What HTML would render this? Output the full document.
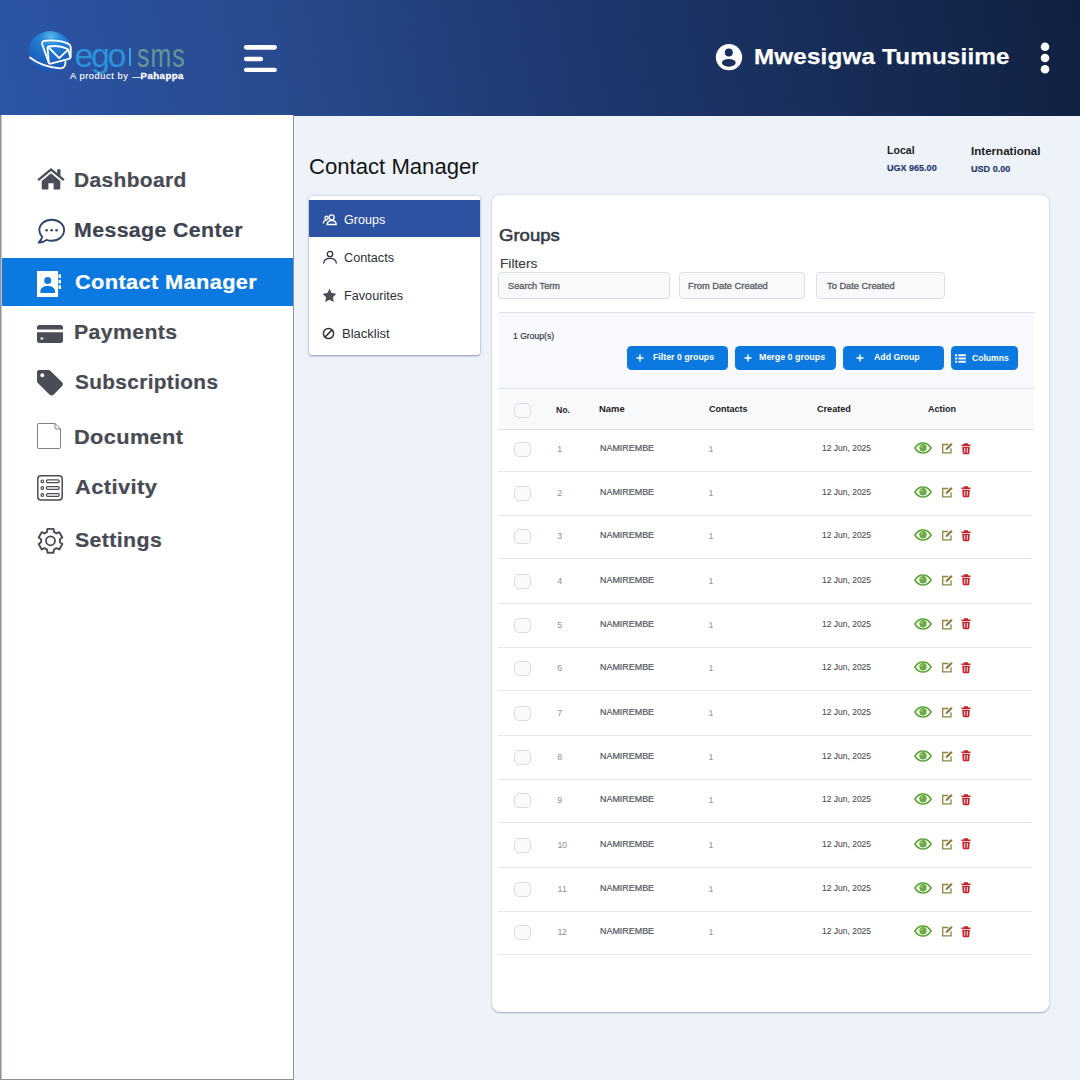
<!DOCTYPE html>
<html lang="en">
<head>
<meta charset="utf-8">
<title>Contact Manager</title>
<style>
*{box-sizing:border-box;margin:0;padding:0}
html,body{width:1080px;height:1080px;overflow:hidden}
body{position:relative;background:#eef2f9;font-family:"Liberation Sans",sans-serif;color:#222}
.a,svg{position:absolute}
.t{position:absolute;white-space:nowrap;line-height:30px;height:30px}
.b{font-weight:700}
#hdr{left:0;top:0;width:1080px;height:116px;background:linear-gradient(80deg,#2b55a6 0%,#284a8e 26%,#1f3a73 50%,#182d59 75%,#102040 100%)}
#side{left:0;top:115px;width:294px;height:965px;background:linear-gradient(90deg,#8d929a 0,#8d929a 1px,#c3c6cc 1px,#c3c6cc 2px,#fff 2px);border-right:1px solid #8b9099;border-bottom:1.500px solid #8b9099}
#act{left:2px;top:258px;width:291px;height:48px;background:#0b79df}
#sub{left:309px;top:196px;width:171px;height:159px;background:#fff;border-radius:3px;box-shadow:0 1px 2px rgba(60,80,130,.5),0 0 3px rgba(60,80,130,.2)}
#subact{left:309px;top:199.500px;width:171px;height:37.300px;background:#2c52a1}
#card{left:491.500px;top:195px;width:557.500px;height:817px;background:#fff;border-radius:8px;box-shadow:0 1px 1.500px rgba(75,90,130,.42),0 0 3px rgba(75,90,130,.15)}
.inp{top:272px;height:27px;border:1px solid #dcdfe4;border-radius:4px;background:#f8f9fa}
#tb{left:499px;top:312px;width:535px;height:77px;background:#f7f9fc;border-top:1px solid #dfe3ea;border-bottom:1px solid #dfe3ea}
.btn{top:346px;height:24px;border-radius:4.5px;background:#0b79df}
#th{left:499px;top:389px;width:535px;height:41px;background:#f8f9fb;border-bottom:1px solid #e0e3ea}
.cb{left:514px;width:17px;height:15px;border:1px solid #d9dce2;border-radius:5px;background:#f9fafb}
.ln{left:498px;width:534px;height:1px;background:#e3e6eb}
</style>
</head>
<body>
<div id="hdr" class="a"></div>
<svg style="left:0;top:0" width="220" height="100" viewBox="0 0 220 100">
<defs><radialGradient id="gl" cx="52%" cy="14%" r="85%"><stop offset="0" stop-color="#58b4ee"/><stop offset=".3" stop-color="#2482d6"/><stop offset=".75" stop-color="#1c62bd"/><stop offset="1" stop-color="#1f58b0"/></radialGradient></defs>
<ellipse cx="50" cy="51.500" rx="21.700" ry="20.400" fill="url(#gl)"/>
<g fill="none" stroke="#fff" stroke-width="1.850" stroke-linejoin="round" stroke-linecap="round">
<path d="M30 57.500C36 62.500 48 68 60 68.300c4 .1 6.200-2.800 5.300-6.500"/>
<path d="M48.600 62.300L42.200 44.200c-.6-1.800.3-3 2.300-3.300 8-1.100 19-.2 24.500 3.300 1.200.8 1.700 1.700 1.700 3v10"/>
<path d="M47.600 48.300c-.3-1 .2-1.600 1.200-1.800 6-1 13.500-.3 18.300 2.200.9.500 1.300 1 1.500 2l1.600 6.300c.2 1-.2 1.600-1.200 1.900L50.800 63.700c-1 .3-1.700-.1-2-1z"/>
<path d="M49.300 48.200l9.900 10 8.600-8.400"/>
</g>
</svg>
<div class="t" style="left:74.5px;top:-15px;font-size:34px;letter-spacing:-2.356px;color:#2d9be2;line-height:40px;height:40px;top:34.800px;opacity:.88">ego</div>
<div class="a" style="left:129.200px;top:47.500px;width:1.500px;height:18px;background:#3aa0e0"></div>
<div class="t" style="left:137.0px;top:-15px;font-size:34px;letter-spacing:1.5px;color:#6a9f96;transform-origin:0 50%;transform:scaleX(0.7318);line-height:40px;height:40px;top:34.800px;opacity:.9">sms</div>
<div class="t" style="left:70.0px;top:61.3px;font-size:9.2px;letter-spacing:0.623px;color:#fff;-webkit-text-stroke:.12px #fff">A product by</div>
<div class="a" style="left:131.500px;top:77px;width:9px;height:1px;background:#c9d6f0"></div>
<div class="t b" style="left:140.5px;top:61.3px;font-size:9.6px;letter-spacing:0.487px;color:#fff;-webkit-text-stroke:.3px #fff">Pahappa</div>
<svg style="left:243px;top:43px" width="36" height="32" viewBox="0 0 36 32"><g fill="#fff"><rect x=".9" y="2" width="33" height="4.700" rx="2.350"/><rect x=".9" y="13.700" width="19.200" height="4.500" rx="2.250"/><rect x=".9" y="24.800" width="33" height="4.300" rx="2.150"/></g></svg>
<svg style="left:715px;top:43px" width="28" height="29" viewBox="0 0 28 29"><circle cx="14" cy="14.200" r="13.150" fill="#fff"/><circle cx="13.800" cy="9.500" r="4" fill="#1b2f5f"/><ellipse cx="13.800" cy="19.800" rx="6.900" ry="3.900" fill="#1b2f5f"/></svg>
<div class="t b" style="left:753.5px;top:41.3px;font-size:22.8px;letter-spacing:0.2px;color:#fff;transform-origin:0 50%;transform:scaleX(1.0595);-webkit-text-stroke:.25px #fff">Mwesigwa Tumusiime</div>
<svg style="left:1038px;top:40px" width="14" height="36" viewBox="0 0 14 36"><g fill="#fff"><circle cx="7" cy="6.700" r="4.300"/><circle cx="7" cy="18" r="4.300"/><circle cx="7" cy="29.300" r="4.300"/></g></svg>
<div id="side" class="a"></div>
<div id="act" class="a"></div>
<svg style="left:37px;top:165px" width="28" height="28" viewBox="0 0 28 28"><path fill="#4a4d55" d="M14 3L.4 14.200l1.500 1.800L14 6.100l12.100 9.900 1.500-1.800-4.100-3.400V4.200h-3.300v3.900z"/><path fill="#4a4d55" d="M14 8.300l-9.300 7.700v7.600c0 .5.400.9.900.9h5.800v-6.200h5.200v6.200h5.800c.5 0 .9-.4.900-.9V16z"/></svg>
<svg style="left:37px;top:217px" width="28" height="28" viewBox="0 0 28 28"><path fill="none" stroke="#30466b" stroke-width="1.900" stroke-linejoin="round" d="M14.700 2.700c-6.900 0-12.400 4.600-12.400 10.400 0 2.600 1.100 4.900 2.900 6.700-.5 2.300-1.700 4.300-3.500 5.800 3.200.2 5.800-.9 7.800-2.700 1.600.6 3.400.9 5.200.9 6.900 0 12.400-4.700 12.400-10.700S21.600 2.700 14.700 2.700z"/><g fill="#30466b"><circle cx="9.600" cy="13.300" r="1.300"/><circle cx="14.600" cy="13.300" r="1.300"/><circle cx="19.600" cy="13.300" r="1.300"/></g></svg>
<svg style="left:37px;top:269px" width="28" height="28" viewBox="0 0 28 28"><path fill="#fff" d="M0 2h20.600c.3 0 .5.200.5.500v25c0 .3-.2.500-.5.500H0z"/><g fill="#0b79df"><circle cx="10.700" cy="11.600" r="3.500"/><path d="M3.300 23c0-4 3.200-5.900 7.400-5.900s7.400 1.900 7.400 5.900c0 .6-.4 1-1 1H4.300c-.6 0-1-.4-1-1z"/></g><g fill="#fff"><rect x="21.600" y="5.300" width="2.400" height="3.700" rx=".6"/><rect x="21.600" y="10.800" width="2.400" height="3.700" rx=".6"/><rect x="21.600" y="16.300" width="2.400" height="3.700" rx=".6"/></g></svg>
<svg style="left:37px;top:320px" width="28" height="28" viewBox="0 0 28 28"><path fill="#4a4d55" d="M2.500 5h21c1.400 0 2.500 1.100 2.500 2.500v2H0v-2C0 6.100 1.100 5 2.500 5z"/><path fill="#4a4d55" fill-rule="evenodd" d="M0 12.300h26v8.200c0 1.400-1.100 2.500-2.500 2.500h-21C1.100 23 0 21.900 0 20.500zM3.600 17.600v2h2.600v-2z"/></svg>
<svg style="left:37px;top:369px" width="28" height="28" viewBox="0 0 28 28"><path fill-rule="evenodd" fill="#4a4d55" d="M0 3c0-1.100.9-2 2-2h9.500c.7 0 1.300.3 1.800.7l11.800 11.500c1.100 1.100 1.100 2.800 0 3.900l-8.500 8.600c-1.100 1.100-2.800 1.100-3.900 0L.8 14c-.5-.5-.8-1.100-.8-1.800zM5.300 4.300a2 2 0 100 4 2 2 0 000-4z"/></svg>
<svg style="left:37px;top:422px" width="28" height="28" viewBox="0 0 28 28"><path fill="#fff" stroke="#6f737a" stroke-width=".9" stroke-linejoin="round" d="M1.500 1.500h16.500l5.500 5.500v18.500c0 .6-.4 1-1 1h-21c-.6 0-1-.4-1-1v-23c0-.6.400-1 1-1z"/><path fill="none" stroke="#6f737a" stroke-width=".9" stroke-linejoin="round" d="M18 1.500v4.500c0 .6.400 1 1 1h4.500"/></svg>
<svg style="left:37px;top:474px" width="28" height="28" viewBox="0 0 28 28"><rect x=".8" y="1.800" width="24.400" height="24.200" rx="3.200" fill="none" stroke="#4a4d55" stroke-width="1.500"/><g fill="none" stroke="#4a4d55" stroke-width="1.200"><circle cx="5.300" cy="7.300" r="1.300"/><circle cx="5.300" cy="14" r="1.300"/><circle cx="5.300" cy="21" r="1.300"/><rect x="9.300" y="5.900" width="13" height="2.800" rx="1.400"/><rect x="9.300" y="12.600" width="13" height="2.800" rx="1.400"/><rect x="9.300" y="19.600" width="13" height="2.800" rx="1.400"/></g></svg>
<svg style="left:37px;top:527px" width="28" height="28" viewBox="0 0 28 28"><path d="M10.11 4.93 L10.40 1.90 L16.60 1.90 L16.89 4.93 L19.49 6.43 L22.26 5.16 L25.36 10.54 L22.88 12.30 L22.88 15.30 L25.36 17.06 L22.26 22.44 L19.49 21.17 L16.89 22.67 L16.60 25.70 L10.40 25.70 L10.11 22.67 L7.51 21.17 L4.74 22.44 L1.64 17.06 L4.12 15.30 L4.12 12.30 L1.64 10.54 L4.74 5.16 L7.51 6.43Z" fill="none" stroke="#4a4d55" stroke-width="1.900" stroke-linejoin="round"/><circle cx="13.5" cy="13.8" r="4.500" fill="none" stroke="#4a4d55" stroke-width="1.800"/></svg>
<div class="t b" style="left:74.0px;top:164.8px;font-size:20px;letter-spacing:0.35px;color:#484b53;transform-origin:0 50%;transform:scaleX(1.047);-webkit-text-stroke:.2px #484b53">Dashboard</div>
<div class="t b" style="left:74.0px;top:215px;font-size:20px;letter-spacing:0.35px;color:#3d4450;transform-origin:0 50%;transform:scaleX(1.0668);-webkit-text-stroke:.2px #3d4450">Message Center</div>
<div class="t b" style="left:74.5px;top:267.3px;font-size:20px;letter-spacing:0.35px;color:#fff;transform-origin:0 50%;transform:scaleX(1.0877);-webkit-text-stroke:.2px #fff">Contact Manager</div>
<div class="t b" style="left:74.0px;top:317px;font-size:20px;letter-spacing:0.35px;color:#484b53;transform-origin:0 50%;transform:scaleX(1.0624);-webkit-text-stroke:.2px #484b53">Payments</div>
<div class="t b" style="left:74.5px;top:367px;font-size:20px;letter-spacing:0.35px;color:#484b53;transform-origin:0 50%;transform:scaleX(1.0395);-webkit-text-stroke:.2px #484b53">Subscriptions</div>
<div class="t b" style="left:74.0px;top:422px;font-size:20px;letter-spacing:0.35px;color:#484b53;transform-origin:0 50%;transform:scaleX(1.0875);-webkit-text-stroke:.2px #484b53">Document</div>
<div class="t b" style="left:75.0px;top:472px;font-size:20px;letter-spacing:0.35px;color:#484b53;transform-origin:0 50%;transform:scaleX(1.0979);-webkit-text-stroke:.2px #484b53">Activity</div>
<div class="t b" style="left:74.5px;top:525px;font-size:20px;letter-spacing:0.35px;color:#484b53;transform-origin:0 50%;transform:scaleX(1.067);-webkit-text-stroke:.2px #484b53">Settings</div>
<div class="t" style="left:309.3px;top:152.2px;font-size:22px;letter-spacing:0px;color:#151515;transform-origin:0 50%;transform:scaleX(1.0056);">Contact Manager</div>
<div class="t b" style="left:886.7px;top:135.7px;font-size:10.4px;letter-spacing:0px;color:#1c1c22;transform-origin:0 50%;transform:scaleX(1.016);">Local</div>
<div class="t b" style="left:886.7px;top:153px;font-size:8.4px;letter-spacing:0px;color:#22356b;transform-origin:0 50%;transform:scaleX(1.0773);-webkit-text-stroke:.15px #22356b">UGX 965.00</div>
<div class="t b" style="left:970.8px;top:137px;font-size:10.4px;letter-spacing:0px;color:#1c1c22;transform-origin:0 50%;transform:scaleX(1.1136);">International</div>
<div class="t b" style="left:970.8px;top:154px;font-size:8.4px;letter-spacing:0px;color:#22356b;transform-origin:0 50%;transform:scaleX(1.082);-webkit-text-stroke:.15px #22356b">USD 0.00</div>
<div id="sub" class="a"></div>
<div id="subact" class="a"></div>
<svg style="left:322px;top:211.5px" width="16" height="16" viewBox="0 0 16 16"><g fill="none" stroke="#fff" stroke-width="1.300" stroke-linecap="round"><circle cx="9.700" cy="5.300" r="2.500"/><path d="M5 12.500c.4-2.800 2.200-4 4.700-4s4.300 1.200 4.700 4z" stroke-linejoin="round"/><circle cx="4.500" cy="5.800" r="1.600"/><path d="M1.300 11c.3-1.900 1.400-2.800 3.200-2.800"/></g></svg>
<svg style="left:322px;top:249px" width="16" height="16" viewBox="0 0 16 16"><g fill="none" stroke="#2f3540" stroke-width="1.300" stroke-linecap="round"><circle cx="8" cy="5" r="2.700"/><path d="M1.700 14c.3-3.300 2.900-4.700 6.300-4.700s6 1.400 6.300 4.700"/></g></svg>
<svg style="left:322px;top:287.5px" width="15" height="15" viewBox="0 0 15 15"><path fill="#4a4e55" d="M7.500.7l2.100 4.400 4.800.7-3.500 3.400.9 4.800-4.300-2.300-4.300 2.300.9-4.800L.6 5.800l4.800-.7z"/></svg>
<svg style="left:322px;top:327px" width="13" height="13" viewBox="0 0 13 13"><g fill="none" stroke="#33373d" stroke-width="1.500"><circle cx="6.500" cy="6.500" r="5.100"/><path d="M2.900 10.100l7.200-7.200"/></g></svg>
<div class="t" style="left:344.0px;top:204.6px;font-size:12.5px;letter-spacing:0px;color:#fff;transform-origin:0 50%;transform:scaleX(1.0052);">Groups</div>
<div class="t" style="left:344.0px;top:243px;font-size:12.5px;letter-spacing:0px;color:#2b303a;transform-origin:0 50%;transform:scaleX(1.0137);">Contacts</div>
<div class="t" style="left:344.0px;top:281px;font-size:12.5px;letter-spacing:0px;color:#2b303a;transform-origin:0 50%;transform:scaleX(1.0129);">Favourites</div>
<div class="t" style="left:342.3px;top:318.6px;font-size:12.5px;letter-spacing:0px;color:#2b303a;transform-origin:0 50%;transform:scaleX(1.0403);">Blacklist</div>
<div id="card" class="a"></div>
<div class="t" style="left:498.8px;top:220.5px;font-size:17px;letter-spacing:0px;color:#333a44;transform-origin:0 50%;transform:scaleX(1.0907);-webkit-text-stroke:.55px #333a44">Groups</div>
<div class="t" style="left:499.7px;top:249px;font-size:13.6px;letter-spacing:0px;color:#3b4046;transform-origin:0 50%;transform:scaleX(1.0076);-webkit-text-stroke:.15px #3b4046">Filters</div>
<div class="a inp" style="left:498px;width:172px"></div>
<div class="a inp" style="left:679px;width:126px"></div>
<div class="a inp" style="left:816px;width:129px"></div>
<div class="t" style="left:507.5px;top:272px;font-size:8.2px;letter-spacing:0px;color:#5b5f66;transform-origin:0 50%;transform:scaleX(1.1245);-webkit-text-stroke:.3px #5b5f66">Search Term</div>
<div class="t" style="left:687.7px;top:272px;font-size:8.2px;letter-spacing:0px;color:#5b5f66;transform-origin:0 50%;transform:scaleX(1.1384);-webkit-text-stroke:.3px #5b5f66">From Date Created</div>
<div class="t" style="left:826.5px;top:272px;font-size:8.2px;letter-spacing:0px;color:#5b5f66;transform-origin:0 50%;transform:scaleX(1.1354);-webkit-text-stroke:.3px #5b5f66">To Date Created</div>
<div id="tb" class="a"></div>
<div class="t" style="left:512.8px;top:322.2px;font-size:8.2px;letter-spacing:0px;color:#30343a;transform-origin:0 50%;transform:scaleX(1.0513);-webkit-text-stroke:.15px #30343a">1 Group(s)</div>
<div class="a btn" style="left:627px;width:101px"></div>
<svg style="left:636px;top:354px" width="8" height="8" viewBox="0 0 8 8"><path d="M4 .5v7M.5 4h7" stroke="#fff" stroke-width="1.500" fill="none"/></svg>
<div class="t b" style="left:652.8px;top:342.3px;font-size:8.4px;letter-spacing:0px;color:#fff;transform-origin:0 50%;transform:scaleX(1.0491);">Filter 0 groups</div>
<div class="a btn" style="left:735px;width:101px"></div>
<svg style="left:743.5px;top:354px" width="8" height="8" viewBox="0 0 8 8"><path d="M4 .5v7M.5 4h7" stroke="#fff" stroke-width="1.500" fill="none"/></svg>
<div class="t b" style="left:759.0px;top:342.3px;font-size:8.4px;letter-spacing:0px;color:#fff;transform-origin:0 50%;transform:scaleX(1.06);">Merge 0 groups</div>
<div class="a btn" style="left:843px;width:101px"></div>
<svg style="left:855.8px;top:354px" width="8" height="8" viewBox="0 0 8 8"><path d="M4 .5v7M.5 4h7" stroke="#fff" stroke-width="1.500" fill="none"/></svg>
<div class="t b" style="left:874.1px;top:342.3px;font-size:8.4px;letter-spacing:0px;color:#fff;transform-origin:0 50%;transform:scaleX(1.042);">Add Group</div>
<div class="a btn" style="left:951px;width:67px"></div>
<svg style="left:955px;top:353.5px" width="11" height="9" viewBox="0 0 11 9"><g fill="#fff"><rect x="0" y=".3" width="2.200" height="1.900"/><rect x="3.400" y=".3" width="7.400" height="1.900"/><rect x="0" y="3.550" width="2.200" height="1.900"/><rect x="3.400" y="3.550" width="7.400" height="1.900"/><rect x="0" y="6.800" width="2.200" height="1.900"/><rect x="3.400" y="6.800" width="7.400" height="1.900"/></g></svg>
<div class="t b" style="left:972.2px;top:342.8px;font-size:8.4px;letter-spacing:0px;color:#fff;transform-origin:0 50%;transform:scaleX(1.0241);">Columns</div>
<div id="th" class="a"></div>
<div class="a cb" style="top:403px"></div>
<div class="t b" style="left:556.3px;top:395.3px;font-size:8.4px;letter-spacing:0px;color:#1f2126;transform-origin:0 50%;transform:scaleX(1.0346);">No.</div>
<div class="t b" style="left:598.8px;top:394.2px;font-size:8.4px;letter-spacing:0px;color:#1f2126;transform-origin:0 50%;transform:scaleX(1.1232);">Name</div>
<div class="t b" style="left:708.8px;top:394.2px;font-size:8.4px;letter-spacing:0px;color:#1f2126;transform-origin:0 50%;transform:scaleX(1.0769);">Contacts</div>
<div class="t b" style="left:816.8px;top:394.2px;font-size:8.4px;letter-spacing:0px;color:#1f2126;transform-origin:0 50%;transform:scaleX(1.0869);">Created</div>
<div class="t b" style="left:927.8px;top:394.2px;font-size:8.4px;letter-spacing:0px;color:#1f2126;transform-origin:0 50%;transform:scaleX(1.0791);">Action</div>
<div class="a ln" style="top:471px"></div>
<div class="a cb" style="top:442.0px"></div>
<div class="t" style="left:557.3px;top:434.0px;font-size:8.8px;letter-spacing:0px;color:#8d9096;">1</div>
<div class="t" style="left:600.2px;top:433.3px;font-size:8.4px;letter-spacing:0px;color:#54585e;transform-origin:0 50%;transform:scaleX(1.0655);-webkit-text-stroke:.2px #54585e">NAMIREMBE</div>
<div class="t" style="left:708.6px;top:434.0px;font-size:8.8px;letter-spacing:0px;color:#8d9096;">1</div>
<div class="t" style="left:822.0px;top:433.3px;font-size:8.4px;letter-spacing:0px;color:#464a50;transform-origin:0 50%;transform:scaleX(1.0128);-webkit-text-stroke:.08px #464a50">12 Jun, 2025</div>
<svg style="left:914px;top:442.4px" width="18" height="12" viewBox="0 0 18 12"><path d="M.9 6C3 2.500 5.800.9 9 .9s6 1.600 8.100 5.100C15 9.500 12.200 11.100 9 11.100S3 9.500.9 6z" fill="#fff" stroke="#5aa332" stroke-width="1.500"/><circle cx="9" cy="5.800" r="3.700" fill="#68ad42"/><circle cx="7.700" cy="4.500" r="1.300" fill="#93cb70"/></svg>
<svg style="left:940.5px;top:441.9px" width="12" height="12" viewBox="0 0 12 12"><path d="M7.200 2.500H1.700v8.300H10V6.300" fill="none" stroke="#8a8740" stroke-width="1.300"/><path d="M4.500 8l.5-2.100 5-5 1.600 1.600-5 5z" fill="#8a7c40"/></svg>
<svg style="left:961px;top:442.5px" width="10" height="12" viewBox="0 0 10 12"><path d="M3.200.3h3.600l.5 1.100h2.200v1.500H.5V1.400h2.200z" fill="#c5222b"/><path fill-rule="evenodd" d="M1.200 3.800h7.600l-.5 6.500c0 .5-.5.900-1 .9H2.700c-.5 0-1-.4-1-.9zM3.300 5.100v4.700h.9V5.100zm2.500 0v4.700h.9V5.100z" fill="#c5222b"/></svg>
<div class="a ln" style="top:515px"></div>
<div class="a cb" style="top:485.7px"></div>
<div class="t" style="left:557.3px;top:477.7px;font-size:8.8px;letter-spacing:0px;color:#8d9096;">2</div>
<div class="t" style="left:600.2px;top:477px;font-size:8.4px;letter-spacing:0px;color:#54585e;transform-origin:0 50%;transform:scaleX(1.0655);-webkit-text-stroke:.2px #54585e">NAMIREMBE</div>
<div class="t" style="left:708.6px;top:477.7px;font-size:8.8px;letter-spacing:0px;color:#8d9096;">1</div>
<div class="t" style="left:822.0px;top:477px;font-size:8.4px;letter-spacing:0px;color:#464a50;transform-origin:0 50%;transform:scaleX(1.0128);-webkit-text-stroke:.08px #464a50">12 Jun, 2025</div>
<svg style="left:914px;top:486.1px" width="18" height="12" viewBox="0 0 18 12"><path d="M.9 6C3 2.500 5.800.9 9 .9s6 1.600 8.100 5.100C15 9.500 12.200 11.100 9 11.100S3 9.500.9 6z" fill="#fff" stroke="#5aa332" stroke-width="1.500"/><circle cx="9" cy="5.800" r="3.700" fill="#68ad42"/><circle cx="7.700" cy="4.500" r="1.300" fill="#93cb70"/></svg>
<svg style="left:940.5px;top:485.6px" width="12" height="12" viewBox="0 0 12 12"><path d="M7.200 2.500H1.700v8.300H10V6.300" fill="none" stroke="#8a8740" stroke-width="1.300"/><path d="M4.500 8l.5-2.100 5-5 1.600 1.600-5 5z" fill="#8a7c40"/></svg>
<svg style="left:961px;top:486.2px" width="10" height="12" viewBox="0 0 10 12"><path d="M3.200.3h3.600l.5 1.100h2.200v1.500H.5V1.400h2.200z" fill="#c5222b"/><path fill-rule="evenodd" d="M1.200 3.800h7.600l-.5 6.500c0 .5-.5.900-1 .9H2.700c-.5 0-1-.4-1-.9zM3.300 5.100v4.700h.9V5.100zm2.500 0v4.700h.9V5.100z" fill="#c5222b"/></svg>
<div class="a ln" style="top:558px"></div>
<div class="a cb" style="top:529.0px"></div>
<div class="t" style="left:557.3px;top:521.0px;font-size:8.8px;letter-spacing:0px;color:#8d9096;">3</div>
<div class="t" style="left:600.2px;top:520.3px;font-size:8.4px;letter-spacing:0px;color:#54585e;transform-origin:0 50%;transform:scaleX(1.0655);-webkit-text-stroke:.2px #54585e">NAMIREMBE</div>
<div class="t" style="left:708.6px;top:521.0px;font-size:8.8px;letter-spacing:0px;color:#8d9096;">1</div>
<div class="t" style="left:822.0px;top:520.3px;font-size:8.4px;letter-spacing:0px;color:#464a50;transform-origin:0 50%;transform:scaleX(1.0128);-webkit-text-stroke:.08px #464a50">12 Jun, 2025</div>
<svg style="left:914px;top:529.4px" width="18" height="12" viewBox="0 0 18 12"><path d="M.9 6C3 2.500 5.800.9 9 .9s6 1.600 8.100 5.100C15 9.500 12.200 11.100 9 11.100S3 9.500.9 6z" fill="#fff" stroke="#5aa332" stroke-width="1.500"/><circle cx="9" cy="5.800" r="3.700" fill="#68ad42"/><circle cx="7.700" cy="4.500" r="1.300" fill="#93cb70"/></svg>
<svg style="left:940.5px;top:528.9px" width="12" height="12" viewBox="0 0 12 12"><path d="M7.200 2.500H1.700v8.300H10V6.300" fill="none" stroke="#8a8740" stroke-width="1.300"/><path d="M4.500 8l.5-2.100 5-5 1.600 1.600-5 5z" fill="#8a7c40"/></svg>
<svg style="left:961px;top:529.5px" width="10" height="12" viewBox="0 0 10 12"><path d="M3.200.3h3.600l.5 1.100h2.200v1.500H.5V1.400h2.200z" fill="#c5222b"/><path fill-rule="evenodd" d="M1.200 3.800h7.600l-.5 6.500c0 .5-.5.900-1 .9H2.700c-.5 0-1-.4-1-.9zM3.300 5.100v4.700h.9V5.100zm2.500 0v4.700h.9V5.100z" fill="#c5222b"/></svg>
<div class="a ln" style="top:603px"></div>
<div class="a cb" style="top:573.7px"></div>
<div class="t" style="left:557.3px;top:565.7px;font-size:8.8px;letter-spacing:0px;color:#8d9096;">4</div>
<div class="t" style="left:600.2px;top:565px;font-size:8.4px;letter-spacing:0px;color:#54585e;transform-origin:0 50%;transform:scaleX(1.0655);-webkit-text-stroke:.2px #54585e">NAMIREMBE</div>
<div class="t" style="left:708.6px;top:565.7px;font-size:8.8px;letter-spacing:0px;color:#8d9096;">1</div>
<div class="t" style="left:822.0px;top:565px;font-size:8.4px;letter-spacing:0px;color:#464a50;transform-origin:0 50%;transform:scaleX(1.0128);-webkit-text-stroke:.08px #464a50">12 Jun, 2025</div>
<svg style="left:914px;top:574.1px" width="18" height="12" viewBox="0 0 18 12"><path d="M.9 6C3 2.500 5.800.9 9 .9s6 1.600 8.100 5.100C15 9.500 12.200 11.100 9 11.100S3 9.500.9 6z" fill="#fff" stroke="#5aa332" stroke-width="1.500"/><circle cx="9" cy="5.800" r="3.700" fill="#68ad42"/><circle cx="7.700" cy="4.500" r="1.300" fill="#93cb70"/></svg>
<svg style="left:940.5px;top:573.6px" width="12" height="12" viewBox="0 0 12 12"><path d="M7.200 2.500H1.700v8.300H10V6.300" fill="none" stroke="#8a8740" stroke-width="1.300"/><path d="M4.500 8l.5-2.100 5-5 1.600 1.600-5 5z" fill="#8a7c40"/></svg>
<svg style="left:961px;top:574.2px" width="10" height="12" viewBox="0 0 10 12"><path d="M3.200.3h3.600l.5 1.100h2.200v1.500H.5V1.400h2.200z" fill="#c5222b"/><path fill-rule="evenodd" d="M1.200 3.800h7.600l-.5 6.500c0 .5-.5.900-1 .9H2.700c-.5 0-1-.4-1-.9zM3.300 5.100v4.700h.9V5.100zm2.500 0v4.700h.9V5.100z" fill="#c5222b"/></svg>
<div class="a ln" style="top:647px"></div>
<div class="a cb" style="top:617.7px"></div>
<div class="t" style="left:557.3px;top:609.7px;font-size:8.8px;letter-spacing:0px;color:#8d9096;">5</div>
<div class="t" style="left:600.2px;top:609px;font-size:8.4px;letter-spacing:0px;color:#54585e;transform-origin:0 50%;transform:scaleX(1.0655);-webkit-text-stroke:.2px #54585e">NAMIREMBE</div>
<div class="t" style="left:708.6px;top:609.7px;font-size:8.8px;letter-spacing:0px;color:#8d9096;">1</div>
<div class="t" style="left:822.0px;top:609px;font-size:8.4px;letter-spacing:0px;color:#464a50;transform-origin:0 50%;transform:scaleX(1.0128);-webkit-text-stroke:.08px #464a50">12 Jun, 2025</div>
<svg style="left:914px;top:618.1px" width="18" height="12" viewBox="0 0 18 12"><path d="M.9 6C3 2.500 5.800.9 9 .9s6 1.600 8.100 5.100C15 9.500 12.200 11.100 9 11.100S3 9.500.9 6z" fill="#fff" stroke="#5aa332" stroke-width="1.500"/><circle cx="9" cy="5.800" r="3.700" fill="#68ad42"/><circle cx="7.700" cy="4.500" r="1.300" fill="#93cb70"/></svg>
<svg style="left:940.5px;top:617.6px" width="12" height="12" viewBox="0 0 12 12"><path d="M7.200 2.500H1.700v8.300H10V6.300" fill="none" stroke="#8a8740" stroke-width="1.300"/><path d="M4.500 8l.5-2.100 5-5 1.600 1.600-5 5z" fill="#8a7c40"/></svg>
<svg style="left:961px;top:618.2px" width="10" height="12" viewBox="0 0 10 12"><path d="M3.200.3h3.600l.5 1.100h2.200v1.500H.5V1.400h2.200z" fill="#c5222b"/><path fill-rule="evenodd" d="M1.200 3.800h7.600l-.5 6.500c0 .5-.5.900-1 .9H2.700c-.5 0-1-.4-1-.9zM3.300 5.100v4.700h.9V5.100zm2.500 0v4.700h.9V5.100z" fill="#c5222b"/></svg>
<div class="a ln" style="top:690px"></div>
<div class="a cb" style="top:661.0px"></div>
<div class="t" style="left:557.3px;top:653.0px;font-size:8.8px;letter-spacing:0px;color:#8d9096;">6</div>
<div class="t" style="left:600.2px;top:652.3px;font-size:8.4px;letter-spacing:0px;color:#54585e;transform-origin:0 50%;transform:scaleX(1.0655);-webkit-text-stroke:.2px #54585e">NAMIREMBE</div>
<div class="t" style="left:708.6px;top:653.0px;font-size:8.8px;letter-spacing:0px;color:#8d9096;">1</div>
<div class="t" style="left:822.0px;top:652.3px;font-size:8.4px;letter-spacing:0px;color:#464a50;transform-origin:0 50%;transform:scaleX(1.0128);-webkit-text-stroke:.08px #464a50">12 Jun, 2025</div>
<svg style="left:914px;top:661.4px" width="18" height="12" viewBox="0 0 18 12"><path d="M.9 6C3 2.500 5.800.9 9 .9s6 1.600 8.100 5.100C15 9.500 12.200 11.100 9 11.100S3 9.500.9 6z" fill="#fff" stroke="#5aa332" stroke-width="1.500"/><circle cx="9" cy="5.800" r="3.700" fill="#68ad42"/><circle cx="7.700" cy="4.500" r="1.300" fill="#93cb70"/></svg>
<svg style="left:940.5px;top:660.9px" width="12" height="12" viewBox="0 0 12 12"><path d="M7.200 2.500H1.700v8.300H10V6.300" fill="none" stroke="#8a8740" stroke-width="1.300"/><path d="M4.500 8l.5-2.100 5-5 1.600 1.600-5 5z" fill="#8a7c40"/></svg>
<svg style="left:961px;top:661.5px" width="10" height="12" viewBox="0 0 10 12"><path d="M3.200.3h3.600l.5 1.100h2.200v1.500H.5V1.400h2.200z" fill="#c5222b"/><path fill-rule="evenodd" d="M1.200 3.800h7.600l-.5 6.500c0 .5-.5.900-1 .9H2.700c-.5 0-1-.4-1-.9zM3.300 5.100v4.700h.9V5.100zm2.500 0v4.700h.9V5.100z" fill="#c5222b"/></svg>
<div class="a ln" style="top:735px"></div>
<div class="a cb" style="top:705.7px"></div>
<div class="t" style="left:557.3px;top:697.7px;font-size:8.8px;letter-spacing:0px;color:#8d9096;">7</div>
<div class="t" style="left:600.2px;top:697px;font-size:8.4px;letter-spacing:0px;color:#54585e;transform-origin:0 50%;transform:scaleX(1.0655);-webkit-text-stroke:.2px #54585e">NAMIREMBE</div>
<div class="t" style="left:708.6px;top:697.7px;font-size:8.8px;letter-spacing:0px;color:#8d9096;">1</div>
<div class="t" style="left:822.0px;top:697px;font-size:8.4px;letter-spacing:0px;color:#464a50;transform-origin:0 50%;transform:scaleX(1.0128);-webkit-text-stroke:.08px #464a50">12 Jun, 2025</div>
<svg style="left:914px;top:706.1px" width="18" height="12" viewBox="0 0 18 12"><path d="M.9 6C3 2.500 5.800.9 9 .9s6 1.600 8.100 5.100C15 9.500 12.200 11.100 9 11.100S3 9.500.9 6z" fill="#fff" stroke="#5aa332" stroke-width="1.500"/><circle cx="9" cy="5.800" r="3.700" fill="#68ad42"/><circle cx="7.700" cy="4.500" r="1.300" fill="#93cb70"/></svg>
<svg style="left:940.5px;top:705.6px" width="12" height="12" viewBox="0 0 12 12"><path d="M7.200 2.500H1.700v8.300H10V6.300" fill="none" stroke="#8a8740" stroke-width="1.300"/><path d="M4.500 8l.5-2.100 5-5 1.600 1.600-5 5z" fill="#8a7c40"/></svg>
<svg style="left:961px;top:706.2px" width="10" height="12" viewBox="0 0 10 12"><path d="M3.200.3h3.600l.5 1.100h2.200v1.500H.5V1.400h2.200z" fill="#c5222b"/><path fill-rule="evenodd" d="M1.200 3.800h7.600l-.5 6.500c0 .5-.5.900-1 .9H2.700c-.5 0-1-.4-1-.9zM3.300 5.100v4.700h.9V5.100zm2.500 0v4.700h.9V5.100z" fill="#c5222b"/></svg>
<div class="a ln" style="top:779px"></div>
<div class="a cb" style="top:749.7px"></div>
<div class="t" style="left:557.3px;top:741.7px;font-size:8.8px;letter-spacing:0px;color:#8d9096;">8</div>
<div class="t" style="left:600.2px;top:741px;font-size:8.4px;letter-spacing:0px;color:#54585e;transform-origin:0 50%;transform:scaleX(1.0655);-webkit-text-stroke:.2px #54585e">NAMIREMBE</div>
<div class="t" style="left:708.6px;top:741.7px;font-size:8.8px;letter-spacing:0px;color:#8d9096;">1</div>
<div class="t" style="left:822.0px;top:741px;font-size:8.4px;letter-spacing:0px;color:#464a50;transform-origin:0 50%;transform:scaleX(1.0128);-webkit-text-stroke:.08px #464a50">12 Jun, 2025</div>
<svg style="left:914px;top:750.1px" width="18" height="12" viewBox="0 0 18 12"><path d="M.9 6C3 2.500 5.800.9 9 .9s6 1.600 8.100 5.100C15 9.500 12.200 11.100 9 11.100S3 9.500.9 6z" fill="#fff" stroke="#5aa332" stroke-width="1.500"/><circle cx="9" cy="5.800" r="3.700" fill="#68ad42"/><circle cx="7.700" cy="4.500" r="1.300" fill="#93cb70"/></svg>
<svg style="left:940.5px;top:749.6px" width="12" height="12" viewBox="0 0 12 12"><path d="M7.200 2.500H1.700v8.300H10V6.300" fill="none" stroke="#8a8740" stroke-width="1.300"/><path d="M4.500 8l.5-2.100 5-5 1.600 1.600-5 5z" fill="#8a7c40"/></svg>
<svg style="left:961px;top:750.2px" width="10" height="12" viewBox="0 0 10 12"><path d="M3.200.3h3.600l.5 1.100h2.200v1.500H.5V1.400h2.200z" fill="#c5222b"/><path fill-rule="evenodd" d="M1.200 3.800h7.600l-.5 6.500c0 .5-.5.900-1 .9H2.700c-.5 0-1-.4-1-.9zM3.300 5.100v4.700h.9V5.100zm2.500 0v4.700h.9V5.100z" fill="#c5222b"/></svg>
<div class="a ln" style="top:822px"></div>
<div class="a cb" style="top:793.0px"></div>
<div class="t" style="left:557.3px;top:785.0px;font-size:8.8px;letter-spacing:0px;color:#8d9096;">9</div>
<div class="t" style="left:600.2px;top:784.3px;font-size:8.4px;letter-spacing:0px;color:#54585e;transform-origin:0 50%;transform:scaleX(1.0655);-webkit-text-stroke:.2px #54585e">NAMIREMBE</div>
<div class="t" style="left:708.6px;top:785.0px;font-size:8.8px;letter-spacing:0px;color:#8d9096;">1</div>
<div class="t" style="left:822.0px;top:784.3px;font-size:8.4px;letter-spacing:0px;color:#464a50;transform-origin:0 50%;transform:scaleX(1.0128);-webkit-text-stroke:.08px #464a50">12 Jun, 2025</div>
<svg style="left:914px;top:793.4px" width="18" height="12" viewBox="0 0 18 12"><path d="M.9 6C3 2.500 5.800.9 9 .9s6 1.600 8.100 5.100C15 9.500 12.200 11.100 9 11.100S3 9.500.9 6z" fill="#fff" stroke="#5aa332" stroke-width="1.500"/><circle cx="9" cy="5.800" r="3.700" fill="#68ad42"/><circle cx="7.700" cy="4.500" r="1.300" fill="#93cb70"/></svg>
<svg style="left:940.5px;top:792.9px" width="12" height="12" viewBox="0 0 12 12"><path d="M7.200 2.500H1.700v8.300H10V6.300" fill="none" stroke="#8a8740" stroke-width="1.300"/><path d="M4.500 8l.5-2.100 5-5 1.600 1.600-5 5z" fill="#8a7c40"/></svg>
<svg style="left:961px;top:793.5px" width="10" height="12" viewBox="0 0 10 12"><path d="M3.200.3h3.600l.5 1.100h2.200v1.500H.5V1.400h2.200z" fill="#c5222b"/><path fill-rule="evenodd" d="M1.200 3.800h7.600l-.5 6.500c0 .5-.5.900-1 .9H2.700c-.5 0-1-.4-1-.9zM3.300 5.100v4.700h.9V5.100zm2.500 0v4.700h.9V5.100z" fill="#c5222b"/></svg>
<div class="a ln" style="top:867px"></div>
<div class="a cb" style="top:837.7px"></div>
<div class="t" style="left:557.5px;top:829.7px;font-size:8.8px;letter-spacing:-0.486px;color:#8d9096;">10</div>
<div class="t" style="left:600.2px;top:829px;font-size:8.4px;letter-spacing:0px;color:#54585e;transform-origin:0 50%;transform:scaleX(1.0655);-webkit-text-stroke:.2px #54585e">NAMIREMBE</div>
<div class="t" style="left:708.6px;top:829.7px;font-size:8.8px;letter-spacing:0px;color:#8d9096;">1</div>
<div class="t" style="left:822.0px;top:829px;font-size:8.4px;letter-spacing:0px;color:#464a50;transform-origin:0 50%;transform:scaleX(1.0128);-webkit-text-stroke:.08px #464a50">12 Jun, 2025</div>
<svg style="left:914px;top:838.1px" width="18" height="12" viewBox="0 0 18 12"><path d="M.9 6C3 2.500 5.800.9 9 .9s6 1.600 8.100 5.100C15 9.500 12.200 11.100 9 11.100S3 9.500.9 6z" fill="#fff" stroke="#5aa332" stroke-width="1.500"/><circle cx="9" cy="5.800" r="3.700" fill="#68ad42"/><circle cx="7.700" cy="4.500" r="1.300" fill="#93cb70"/></svg>
<svg style="left:940.5px;top:837.6px" width="12" height="12" viewBox="0 0 12 12"><path d="M7.200 2.500H1.700v8.300H10V6.300" fill="none" stroke="#8a8740" stroke-width="1.300"/><path d="M4.500 8l.5-2.100 5-5 1.600 1.600-5 5z" fill="#8a7c40"/></svg>
<svg style="left:961px;top:838.2px" width="10" height="12" viewBox="0 0 10 12"><path d="M3.200.3h3.600l.5 1.100h2.200v1.500H.5V1.400h2.200z" fill="#c5222b"/><path fill-rule="evenodd" d="M1.200 3.800h7.600l-.5 6.500c0 .5-.5.900-1 .9H2.700c-.5 0-1-.4-1-.9zM3.300 5.100v4.700h.9V5.100zm2.500 0v4.700h.9V5.100z" fill="#c5222b"/></svg>
<div class="a ln" style="top:911px"></div>
<div class="a cb" style="top:881.7px"></div>
<div class="t" style="left:557.5px;top:873.7px;font-size:8.8px;letter-spacing:0.166px;color:#8d9096;">11</div>
<div class="t" style="left:600.2px;top:873px;font-size:8.4px;letter-spacing:0px;color:#54585e;transform-origin:0 50%;transform:scaleX(1.0655);-webkit-text-stroke:.2px #54585e">NAMIREMBE</div>
<div class="t" style="left:708.6px;top:873.7px;font-size:8.8px;letter-spacing:0px;color:#8d9096;">1</div>
<div class="t" style="left:822.0px;top:873px;font-size:8.4px;letter-spacing:0px;color:#464a50;transform-origin:0 50%;transform:scaleX(1.0128);-webkit-text-stroke:.08px #464a50">12 Jun, 2025</div>
<svg style="left:914px;top:882.1px" width="18" height="12" viewBox="0 0 18 12"><path d="M.9 6C3 2.500 5.800.9 9 .9s6 1.600 8.100 5.100C15 9.500 12.200 11.100 9 11.100S3 9.500.9 6z" fill="#fff" stroke="#5aa332" stroke-width="1.500"/><circle cx="9" cy="5.800" r="3.700" fill="#68ad42"/><circle cx="7.700" cy="4.500" r="1.300" fill="#93cb70"/></svg>
<svg style="left:940.5px;top:881.6px" width="12" height="12" viewBox="0 0 12 12"><path d="M7.200 2.500H1.700v8.300H10V6.300" fill="none" stroke="#8a8740" stroke-width="1.300"/><path d="M4.500 8l.5-2.100 5-5 1.600 1.600-5 5z" fill="#8a7c40"/></svg>
<svg style="left:961px;top:882.2px" width="10" height="12" viewBox="0 0 10 12"><path d="M3.200.3h3.600l.5 1.100h2.200v1.500H.5V1.400h2.200z" fill="#c5222b"/><path fill-rule="evenodd" d="M1.200 3.800h7.600l-.5 6.500c0 .5-.5.900-1 .9H2.700c-.5 0-1-.4-1-.9zM3.300 5.100v4.700h.9V5.100zm2.500 0v4.700h.9V5.100z" fill="#c5222b"/></svg>
<div class="a ln" style="top:954px"></div>
<div class="a cb" style="top:925.0px"></div>
<div class="t" style="left:557.5px;top:917.0px;font-size:8.8px;letter-spacing:-0.486px;color:#8d9096;">12</div>
<div class="t" style="left:600.2px;top:916.3px;font-size:8.4px;letter-spacing:0px;color:#54585e;transform-origin:0 50%;transform:scaleX(1.0655);-webkit-text-stroke:.2px #54585e">NAMIREMBE</div>
<div class="t" style="left:708.6px;top:917.0px;font-size:8.8px;letter-spacing:0px;color:#8d9096;">1</div>
<div class="t" style="left:822.0px;top:916.3px;font-size:8.4px;letter-spacing:0px;color:#464a50;transform-origin:0 50%;transform:scaleX(1.0128);-webkit-text-stroke:.08px #464a50">12 Jun, 2025</div>
<svg style="left:914px;top:925.4px" width="18" height="12" viewBox="0 0 18 12"><path d="M.9 6C3 2.500 5.800.9 9 .9s6 1.600 8.100 5.100C15 9.500 12.200 11.100 9 11.100S3 9.500.9 6z" fill="#fff" stroke="#5aa332" stroke-width="1.500"/><circle cx="9" cy="5.800" r="3.700" fill="#68ad42"/><circle cx="7.700" cy="4.500" r="1.300" fill="#93cb70"/></svg>
<svg style="left:940.5px;top:924.9px" width="12" height="12" viewBox="0 0 12 12"><path d="M7.200 2.500H1.700v8.300H10V6.300" fill="none" stroke="#8a8740" stroke-width="1.300"/><path d="M4.500 8l.5-2.100 5-5 1.600 1.600-5 5z" fill="#8a7c40"/></svg>
<svg style="left:961px;top:925.5px" width="10" height="12" viewBox="0 0 10 12"><path d="M3.200.3h3.600l.5 1.100h2.200v1.500H.5V1.400h2.200z" fill="#c5222b"/><path fill-rule="evenodd" d="M1.200 3.800h7.600l-.5 6.500c0 .5-.5.900-1 .9H2.700c-.5 0-1-.4-1-.9zM3.300 5.100v4.700h.9V5.100zm2.500 0v4.700h.9V5.100z" fill="#c5222b"/></svg>

</body>
</html>
